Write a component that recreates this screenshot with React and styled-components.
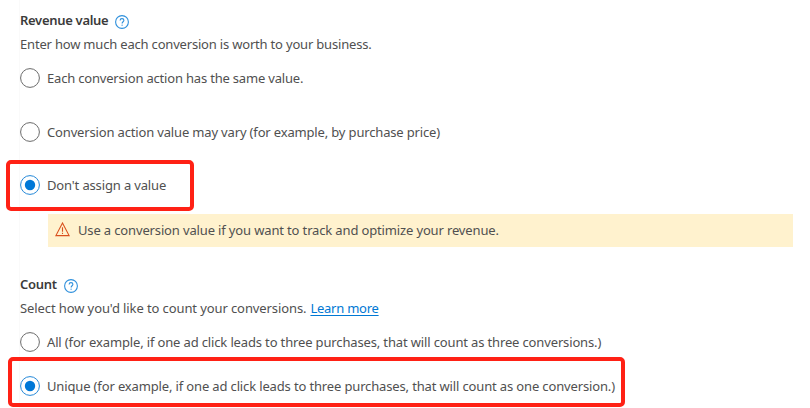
import React, { useState } from "react";
import styled, { createGlobalStyle } from "styled-components";


const GlobalStyle = createGlobalStyle`
    body {
        margin: 0;
        background-color: #ffffff;
    }
`
const MainContainer = styled.main`
    box-sizing: border-box;
    width: 791px;
    height: 408px;
    margin-left: 19px;
    padding: 8px 17px 0 0;
    border-left: 1px solid #fafafa;
    font-family: "Noto Sans", "Open Sans", sans-serif;
    font-size: 13px;
    color: #505050;
`
const Section = styled.section`
    height: ${(props) => props.$height}px;
`
const TitleRow = styled.div`
    display: flex;
    align-items: center;
    gap: 7px;
    height: 24px;
`
const Title = styled.h2`
    margin: 0;
    font-size: 13px;
    line-height: 24px;
    font-weight: 600;
    color: #3b3b3b;
    letter-spacing: -0.3px;
`
const HelpIcon = styled.svg`
    width: 14px;
    height: 14px;
    margin-top: 3px;
`
const Text = styled.span`
    line-height: 20px;
    white-space: nowrap;
    letter-spacing: ${(props) => props.$spacing || -0.145}px;
`
const Description = styled.div`
    display: flex;
    align-items: center;
    gap: 4px;
    height: 24px;
`
const Link = styled.a`
    color: #0078d4;
    line-height: 20px;
    text-decoration: underline;
    text-underline-offset: 2px;
    letter-spacing: -0.25px;
`
const Option = styled.label`
    position: relative;
    display: flex;
    align-items: center;
    gap: 7px;
    width: max-content;
    height: 20px;
    margin-top: ${(props) => props.$top}px;
`
const HiddenInput = styled.input`
    position: absolute;
    opacity: 0;
    margin: 0;
`
const RadioIcon = styled.svg`
    width: 20px;
    height: 20px;
`
const Highlight = styled.div`
    position: absolute;
    box-sizing: border-box;
    top: ${(props) => props.$top}px;
    left: ${(props) => props.$left}px;
    width: ${(props) => props.$width}px;
    height: ${(props) => props.$height}px;
    border: 4px solid #ff2115;
    border-radius: 5px;
    pointer-events: none;
`
const Warning = styled.div`
    box-sizing: border-box;
    display: flex;
    align-items: center;
    gap: 8px;
    height: 33px;
    margin: 19px 0 0 28px;
    padding: 0 0 1px 7px;
    background-color: #fff2ce;
`
const WarningIcon = styled.svg`
    width: 15px;
    height: 15px;
    margin-top: -1px;
`


const Help = () => (
    <HelpIcon viewBox="0 0 14 14" fill="none" stroke="#2f90dc">
        <circle cx="7" cy="7" r="6.4" strokeWidth="1.1" />
        <path d="M5.1 5.5c0-1.2.8-1.9 1.9-1.9s1.9.7 1.9 1.7C8.9 6.7 7.1 6.800 7.1 8.500" strokeWidth="1.1" />
        <circle cx="7.1" cy="10.200" r=".65" fill="#2f90dc" stroke="none" />
    </HelpIcon>
)

const Radio = ({ name, top, label, spacing, checked, onChange, children }) => (
    <Option $top={top}>
        <HiddenInput type="radio" name={name} checked={checked} onChange={onChange} />
        <RadioIcon viewBox="0 0 20 20" fill="none">
            <circle cx="10" cy="10" r="9.4" stroke={checked ? "#2488d8" : "#6b6b6b"} strokeWidth="1" />
            {checked && <circle cx="10" cy="10" r="5.2" fill="#0078d7" />}
        </RadioIcon>
        <Text $spacing={spacing}>{label}</Text>
        {children}
    </Option>
)


const App = () => {

    const [revenue, setRevenue] = useState("none")
    const [count, setCount] = useState("unique")

    return (
        <>
            <GlobalStyle />
            <MainContainer>
                <Section $height={264}>
                    <TitleRow>
                        <Title>Revenue value</Title>
                        <Help />
                    </TitleRow>
                    <Description>
                        <Text $spacing={-0.19}>Enter how much each conversion is worth to your business.</Text>
                    </Description>

                    <Radio name="revenue" top={12} spacing={-0.19} label="Each conversion action has the same value."
                        checked={revenue === "same"} onChange={() => setRevenue("same")} />
                    <Radio name="revenue" top={34} spacing={-0.16} label="Conversion action value may vary (for example, by purchase price)"
                        checked={revenue === "vary"} onChange={() => setRevenue("vary")} />
                    <Radio name="revenue" top={33} label="Don't assign a value"
                        checked={revenue === "none"} onChange={() => setRevenue("none")}>
                        <Highlight $top={-15} $left={-14} $width={188} $height={51} />
                    </Radio>

                    <Warning>
                        <WarningIcon viewBox="0 0 15 15" fill="none" stroke="#d9501e">
                            <path d="M7.5 1L14.1 13.6H.9Z" strokeWidth="1.1" />
                            <path d="M7.5 5.300v4.400M7.5 10.700v1.300" strokeWidth="1.1" />
                        </WarningIcon>
                        <Text>Use a conversion value if you want to track and optimize your revenue.</Text>
                    </Warning>
                </Section>

                <Section $height={136}>
                    <TitleRow>
                        <Title>Count</Title>
                        <Help />
                    </TitleRow>
                    <Description>
                        <Text $spacing={-0.1}>Select how you'd like to count your conversions.</Text>
                        <Link href="#">Learn more</Link>
                    </Description>

                    <Radio name="count" top={12} label="All (for example, if one ad click leads to three purchases, that will count as three conversions.)"
                        checked={count === "all"} onChange={() => setCount("all")} />
                    <Radio name="count" top={24} label="Unique (for example, if one ad click leads to three purchases, that will count as one conversion.)"
                        checked={count === "unique"} onChange={() => setCount("unique")}>
                        <Highlight $top={-19} $left={-12} $width={617} $height={50} />
                    </Radio>
                </Section>
            </MainContainer>
        </>
    )
}

export default App;
